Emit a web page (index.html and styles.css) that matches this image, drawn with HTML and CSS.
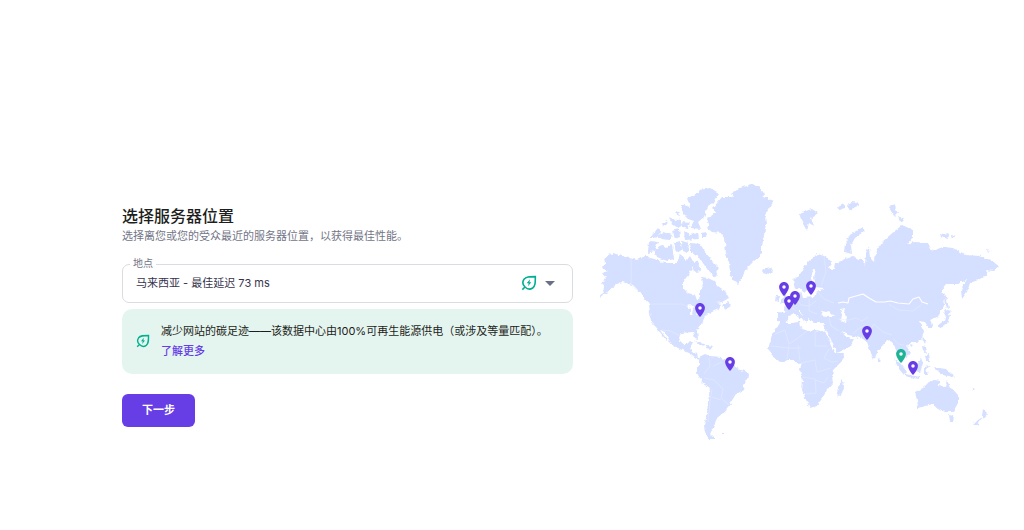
FILE: index.html
```html
<!DOCTYPE html>
<html lang="zh-CN">
<head>
<meta charset="UTF-8">
<meta name="viewport" content="width=device-width, initial-scale=1">
<title>选择服务器位置</title>
<link rel="stylesheet" href="styles.css">
</head>
<body>

<svg class="defs" aria-hidden="true">
  <symbol id="leaf" viewBox="0 0 24 24">
    <path d="M2 22l4-4M6 18C2.500 14.500 2 10 4.500 6.500 7.500 2.500 12 2.500 21.500 2.500c0 9.500 0 14-4 17-3.500 2.500-8 2-11.500-1.500z" fill="none" stroke="currentColor" stroke-width="2.400"/>
    <path d="M13.500 6.500L8.500 12.500h3L10.500 17l5-6H12.700z" fill="currentColor"/>
  </symbol>
  <symbol id="pin" viewBox="0 0 14 20">
    <path d="M7 0C3.130 0 0 3.130 0 7c0 5.250 7 13 7 13s7-7.750 7-13c0-3.870-3.130-7-7-7z" fill="currentColor"/>
    <circle cx="7" cy="7" r="2.500" fill="#fff"/>
  </symbol>
</svg>

<main class="page">
  <form class="form">
    <h1>选择服务器位置</h1>
    <p class="subtitle">选择离您或您的受众最近的服务器位置，以获得最佳性能。</p>

    <div class="field">
      <label for="location">地点</label>
      <select id="location">
        <option>马来西亚 - 最佳延迟 73 ms</option>
      </select>
      <div class="field-icons">
        <svg class="leaf"><use href="#leaf"/></svg>
        <svg class="caret" viewBox="0 0 10 5"><path d="M0 0h10L5 5z" fill="currentColor"/></svg>
      </div>
    </div>

    <div class="notice">
      <svg class="leaf"><use href="#leaf"/></svg>
      <p>减少网站的碳足迹——该数据中心由100%可再生能源供电（或涉及等量匹配）。<br><a href="#">了解更多</a></p>
    </div>

    <button type="button">下一步</button>
  </form>

  <svg class="map" viewBox="600 180 400 262" role="img" aria-label="世界地图">
    <defs>
      <filter id="coast" x="-2%" y="-2%" width="104%" height="104%">
        <feTurbulence type="fractalNoise" baseFrequency="0.25" numOctaves="2" seed="4"/>
        <feDisplacementMap in="SourceGraphic" scale="4" xChannelSelector="R" yChannelSelector="G"/>
      </filter>
    </defs>

    <g class="land" filter="url(#coast)">
      <!-- North America -->
      <path d="M613 253L625 257 637 260 645 256 657 260 665 263 677 263 680 254 687 260 690 256 694 263 690 272 687 277 683 282 683 288 688 293 695 295 697 300 700 298 700 290 703 284 702 277 708 278 714 281 718 286 725 291 729 298 722 302 716 303 722 304 719 309 714 311 708 314 704 318 702 324 697 330 698 339 695 338 693 332 681 333 679 338 682 344 687 344 690 341 693 342 690 348 692 352 697 353 698 358 703 357 702 360 696 359 690 354 680 349 672 345 668 338 663 331 660 330 668 341 665 340 657 328 651 322 650 313 649 304 643 297 638 290 633 285 622 282 617 284 610 290 600 297 605 289 602 284 606 278 602 273 608 271 602 268 605 264 604 258z"/>
      <path d="M723 306l5-4 3 4-5 3z"/>
      <!-- Arctic islands -->
      <path d="M687 198L693 196 700 190 710 188 719 193 713 202 707 208 704 217 698 222 701 229 690 228 694 221 688 219 682 213 681 204 690 207z"/>
      <path d="M684 231l6 4 8-2 1 6-14 1zM649 241l9 1-4 9-6 2zM654 249l9-4 4 3 5-4 2 15-7 2-10-4z"/>
      <path d="M690 243L700 244 706 253 713 262 719 268 716 277 710 273 705 266 700 259 695 255 691 252zM650 238l8-10 3 4-6 6zM657 236l6-4 9 3-2 5-9-1zM672 231l7-2 1 8-6 2zM673 243l7-2 3 8-6 4zM682 241l7 2-1 10-5-2zM691 261l7 1 3 9-7 1zM669 217l6 3 4-1 4 6-5 3-7-5zM662 223l5-3 1 3-5 3zM682 222l8 1-2 5-5-1zM701 233l6-1-1 5-5 0zM676 210l3 1 1 5-3-1z"/>
      <!-- Greenland, Iceland -->
      <path d="M752 184L760 187 763 192 764 197 774 201 770 207 765 215 766 225 764 235 762 247 762 254 753 262 745 270 742 279 738 284 733 280 730 274 729 262 726 254 725 242 722 233 712 232 707 228 709 223 707 219 715 213 713 208 722 197 733 197 731 194 740 188z"/>
      <path d="M762 269l9-2 2 4-4 4-6-2z"/>
      <!-- Caribbean -->
      <path d="M694 341l6 1 6 3-5 1zM707 345l6 1-2 3-5-1z"/>
      <!-- South America -->
      <path d="M699 357L705 354 710 356 722 357 725 362 733 365 737 368 748 373 749 376 745 382 743 390 735 395 732 402 727 408 723 413 717 418 713 428 710 434 715 439 709 439 705 433 704 425 707 413 708 402 710 388 702 382 697 373 697 368 700 363z"/>
      <path d="M721 433h2v1h-2z"/>
      <!-- Africa -->
      <path d="M780 323L792 323 799 322 801 328 807 331 815 330 825 332 827 337 832 348 835 353 844 353 843 360 833 370 832 377 833 383 827 390 823 397 817 406 810 408 807 402 802 390 803 380 800 370 801 365 795 360 788 360 780 362 772 355 768 350 770 342 773 333z"/>
      <path d="M843 380L844 387 841 396 837 395 838 386z"/>
      <!-- Eurasia -->
      <path d="M778 312L787 313 784 307 790 305 796 301 799 296 801 291 803 298 814 297 817 291 824 288 815 287 810 284 808 289 804 293 800 288 795 289 793 281 798 276 802 270 807 263 813 257 818 254 824 256 832 262 828 268 834 269 835 263 845 259 853 257 862 260 865 265 866 253 869 246 870 258 874 262 877 250 882 242 890 235 902 225 913 230 913 237 907 244 915 242 928 243 932 251 943 247 953 248 965 255 980 256 990 260 999 266 993 271 986 270 987 275 978 280 970 283 967 292 962 299 961 290 967 279 958 284 947 284 940 292 945 296 944 306 937 317 930 320 933 328 929 328 925 322 919 321 924 331 922 338 917 343 910 343 907 347 911 353 905 357 900 350 903 362 899 357 895 347 892 342 888 340 882 347 877 353 874 360 871 353 867 342 863 339 853 336 848 335 842 331 845 337 849 337 854 340 850 347 837 353 832 345 825 335 824 328 825 323 815 323 808 318 808 323 803 317 800 311 798 311 805 318 804 321 794 313 789 315 788 320 783 324 778 321z"/>
      <path d="M781 287l4 3 2 12-7 2 3-7zM776 296l4 0-2 6-3-1zM878 358l3 3-3 2z"/>
      <!-- Arctic Russia, Svalbard -->
      <path d="M799 213L812 209 818 213 811 218 814 226 809 223 807 231 802 222zM844 252L845 244 850 235 862 227 864 231 855 238 851 245 852 254zM838 207l6-3 0 4-4 2zM847 205l7-3 5 3-9 5zM889 207l5-3 4 9-4 4zM898 216l6 2-4 4zM940 233l9 2-1 4-7-2zM951 235l5 1-4 2zM986 250l5 1-3 1z"/>
      <!-- Japan, Sakhalin -->
      <path d="M945 293l4 15-4-1zM945 309l7 2-5 4-4-1zM946 314l4 1-3 9-9 4 0-3 6-4z"/>
      <!-- South-east Asia -->
      <path d="M894 359l6 4 7 9-3 3-5-6zM905 374l15 3-1 2-14-3zM912 366l6-3 3-5 2 5-3 10-6-1zM922 338l4 2-1 4zM922 346l4 1 1 6-4-3zM925 356l4-2 1 7-4 0zM924 367l6-1-4 3 2 5-4 0zM934 367l5 1 7 1 9 9-6-2-6-1-4-3zM910 344l3 1-2 2z"/>
      <!-- Oceania -->
      <path d="M915 392L923 388 928 383 935 380 940 381 939 385 945 387 947 380 950 387 958 396 958 403 953 412 945 412 938 408 933 404 925 406 918 408 917 400zM949 415l5 1-1 5-3 0zM983 409l5 5-4 5-2-3zM983 417l-6 8-4 0 5-5zM970 387l5 4-2 0z"/>
    </g>

    <!-- inland seas -->
    <g class="water" filter="url(#coast)">
      <path d="M820 316l2-5 4 1 3-1 6 6-7 0zM840 309l5-1-1 4 3 4-1 6-5-2 1-5zM812 284l-1-6 2-8 3-1-2 8 1 6zM686 306l6-1 4 3-3 1-1 6-2 0 0-6zM696 313l5-3 1 2-5 2zM824 329l2 0 10 21 1 3-3-2z"/>
    </g>

    <!-- borders -->
    <g class="borders">
      <path class="strong" d="M838 303l5-1 5 1 1-5 7-2 7-2 6 4 7 4 9 0 5-1 8 2 11 1 4-5 6-2 3 5 6 2"/>
      <path d="M631 258v27l7 6M650 304h32l6 3M662 330l9 1 9 5M775 334l10-4 4 14 9-6 9-7M815 331v15h13M789 345l-2 14M798 345l2 16M771 346l18 2 12 0M801 363l14-3 2 12 14-4M803 377l12 2 1 14-10 1M815 380l9 3 4-6M829 349l-5 9 8 4 6-1M709 358l1 8-6 8M713 366l9-4M704 378l10 2 9 9-2 9 8 7M712 389l-2 13-2 20M721 400l-9-3M790 306l6 5M797 300l4 5 8 1 7-5M809 299v12l8 3M817 291l7 8 10 4M829 318l2 8 8 5M838 319l10 1 8-2 6 3 6-4M853 334l5-5 7-4M866 336l8-12 9 8 9 3M889 304l9 6 15 1 9-7M893 338l5 6 6 1M824 257l2 15-5 14"/>
    </g>

    <g class="pins">
      <use href="#pin" x="695" y="303" width="10" height="14"/>
      <use href="#pin" x="725" y="357" width="10" height="14"/>
      <use href="#pin" x="779" y="282" width="10" height="14"/>
      <use href="#pin" x="790" y="291" width="10" height="14"/>
      <use href="#pin" x="784" y="296" width="10" height="14"/>
      <use href="#pin" x="806" y="281" width="10" height="14"/>
      <use href="#pin" x="862" y="326" width="10" height="14"/>
      <use href="#pin" x="908" y="361" width="10" height="14"/>
      <use class="selected" href="#pin" x="896" y="349" width="10" height="14"/>
    </g>
  </svg>
</main>

</body>
</html>
```
FILE: styles.css
```css
*{box-sizing:border-box}
body{margin:0;background:#fff;color:#1d1e20;font-family:Inter,"Noto Sans CJK SC",sans-serif;font-size:11px;line-height:20px}
h1,p{margin:0}
.defs{position:absolute;width:0;height:0}

.page{display:grid;grid-template-columns:451fr 400fr;gap:27px;align-items:center;min-height:100vh;padding:92px 24px 0 122px}
.form{padding-top:10px}

h1{font-size:16px;font-weight:500;line-height:20px}
.subtitle{margin-bottom:18px;color:#727586}

.field{position:relative;margin-bottom:6px}
.field label{position:absolute;top:-6px;left:8px;padding:0 3px;background:#fff;color:#727586;font-size:10px;line-height:10px}
select{display:block;width:100%;height:39px;padding:0 64px 0 13px;border:1px solid #dadce0;border-radius:7px;background:#fff;color:#36344d;font:inherit;appearance:none;cursor:pointer}
.field-icons{position:absolute;top:0;right:18px;height:100%;display:flex;align-items:center;gap:8px;color:#6b6f85;pointer-events:none}
.field-icons .leaf{width:16px;height:16px}
.caret{width:10px;height:5px}
.leaf{flex:none;width:14px;height:14px;color:#00b090}

.notice{display:flex;align-items:center;gap:11px;margin-bottom:20px;padding:12px 14px 13px;border-radius:10px;background:#e4f5ef}
.notice a{color:#673de6;font-weight:500;text-decoration:none}

button{display:block;height:33px;padding:0 20px;border:none;border-radius:6px;background:#673de6;color:#fff;font:inherit;font-weight:700;cursor:pointer}

.map{display:block;width:100%}
.land{fill:#d5dfff}
.water{fill:#fff}
.borders{fill:none;stroke:#e6ecff;stroke-width:.6;stroke-linejoin:round}
.borders .strong{stroke:#fff;stroke-width:1.200}
.pins{color:#673de6}
.pins .selected{color:#1fb396}
```
